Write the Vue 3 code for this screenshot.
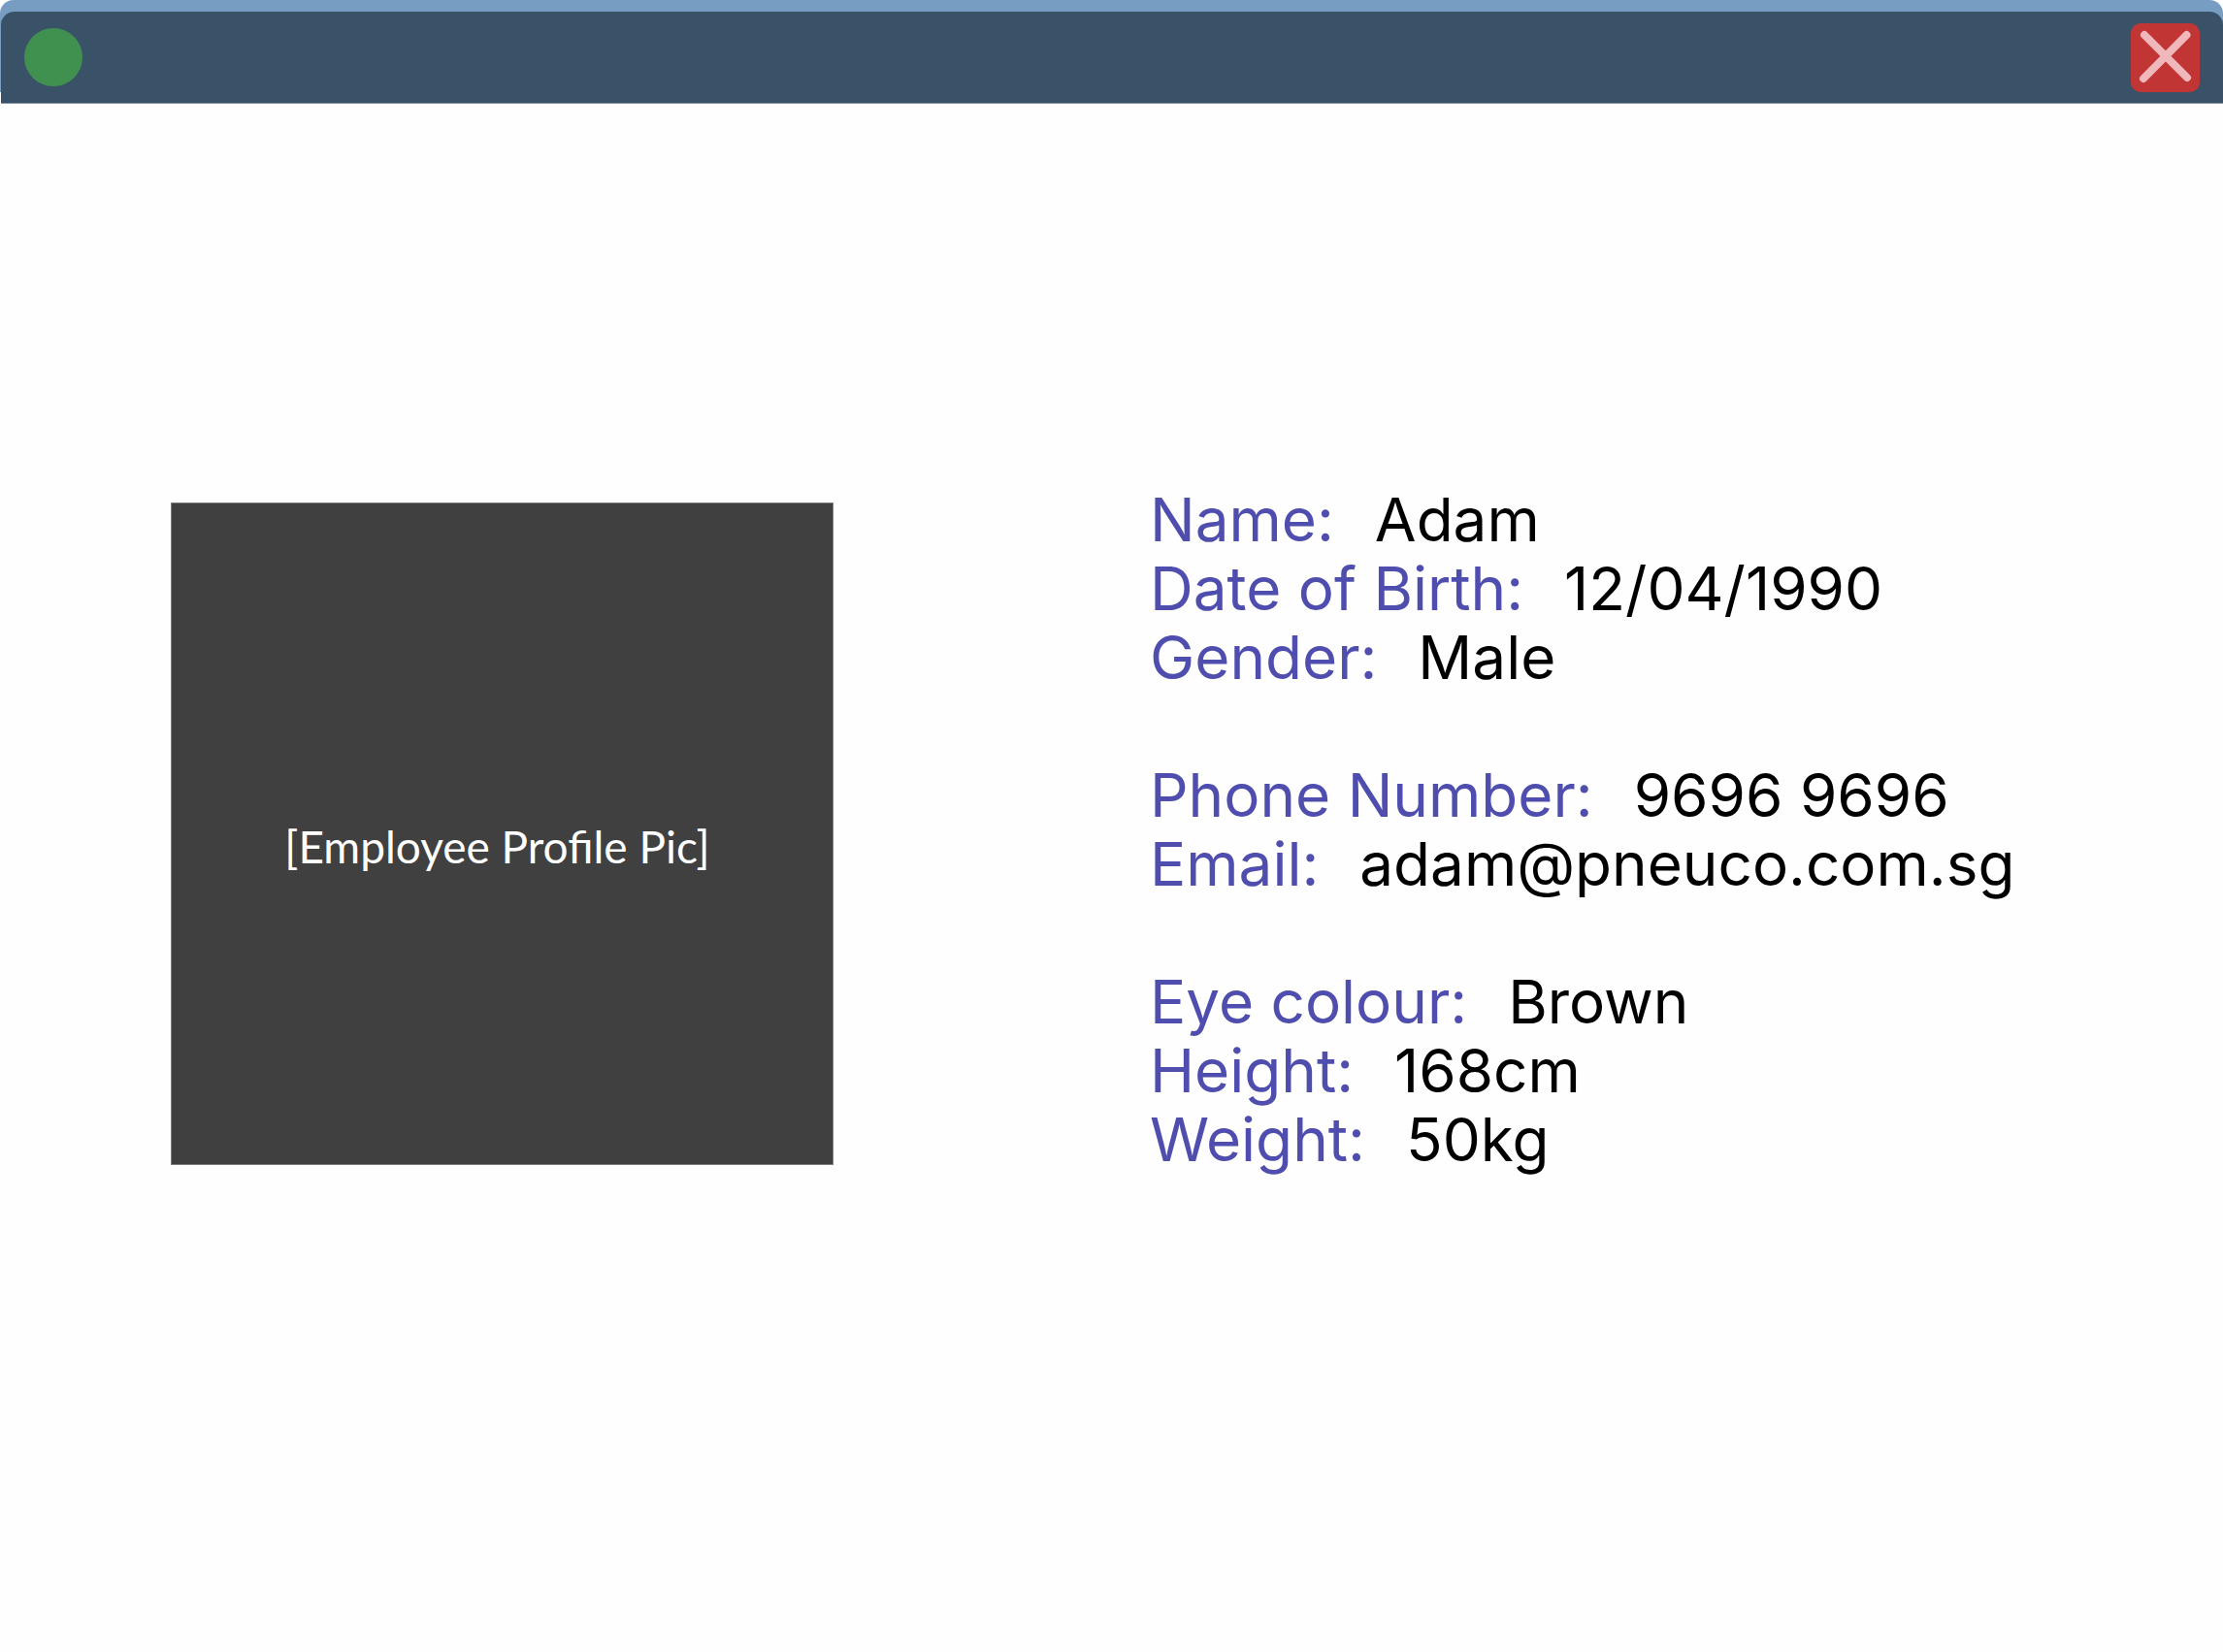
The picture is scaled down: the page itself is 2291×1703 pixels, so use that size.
<script setup>
const groups = [
  [
    { label: 'Name:', value: 'Adam' },
    { label: 'Date of Birth:', value: '12/04/1990' },
    { label: 'Gender:', value: 'Male' },
  ],
  [
    { label: 'Phone Number:', value: '9696 9696' },
    { label: 'Email:', value: 'adam@pneuco.com.sg' },
  ],
  [
    { label: 'Eye colour:', value: 'Brown' },
    { label: 'Height:', value: '168cm' },
    { label: 'Weight:', value: '50kg' },
  ],
]
</script>

<template>
  <div class="window">
    <header class="frame">
      <div class="titlebar">
        <span class="status"></span>
        <button class="close" type="button" aria-label="Close">
          <svg viewBox="0 0 71 71" aria-hidden="true">
            <path d="M14 12 58 56M57.500 12 13 57" />
          </svg>
        </button>
      </div>
    </header>

    <main class="profile">
      <div class="photo">[Employee Profile Pic]</div>
      <div class="details">
        <dl v-for="(group, i) in groups" :key="i" class="group">
          <div v-for="row in group" :key="row.label" class="row">
            <dt>{{ row.label }}</dt>
            <dd>{{ row.value }}</dd>
          </div>
        </dl>
      </div>
    </main>
  </div>
</template>

<style>
body {
  margin: 0;
  background: #fefefe;
}
</style>

<style scoped>
.window {
  display: flex;
  flex-direction: column;
  min-height: 100vh;
  font-family: Inter, "Liberation Sans", sans-serif;
}

.frame {
  padding: 12px 0 0 1px;
  background: linear-gradient(#789dc2, #789dc2) no-repeat 0 0 / 100% 95px;
  border-radius: 14px 14px 0 0;
}

.titlebar {
  display: flex;
  align-items: flex-start;
  justify-content: space-between;
  height: 95px;
  padding: 12px 24px 0;
  box-sizing: border-box;
  border-bottom: 1px solid #8296a6;
  border-radius: 14px 14px 0 0;
  background: #395268;
}

.status {
  width: 60px;
  height: 60px;
  margin-top: 5px;
  border-radius: 50%;
  background: #409150;
}

.close {
  width: 71px;
  height: 71px;
  padding: 0;
  border: 0;
  border-radius: 10px;
  background: #c23535;
  cursor: pointer;
}

.close svg {
  display: block;
  width: 100%;
  height: 100%;
  fill: none;
  stroke: #f0b8ba;
  stroke-width: 8;
  stroke-linecap: round;
}

.profile {
  display: grid;
  grid-template-columns: 683fr 1106fr;
  column-gap: 326px;
  align-items: start;
  padding: 411px 0 0 176px;
}

.photo {
  display: flex;
  align-items: center;
  justify-content: center;
  box-sizing: border-box;
  aspect-ratio: 1;
  padding: 26px 10px 0 0;
  border: 1px solid #7c7c7c;
  background: #404040;
  color: #fff;
  font-family: Lato, "Open Sans", sans-serif;
  font-size: 46px;
}

.details {
  display: flex;
  flex-direction: column;
  gap: 71px;
  margin-top: -18px;
}

.group {
  margin: 0;
}

.row {
  display: flex;
  align-items: baseline;
  gap: 42px;
  font-size: 62px;
  line-height: 71px;
  white-space: nowrap;
}

dt {
  color: #4f4eaf;
}

dd {
  margin: 0;
  color: #000;
}
</style>
